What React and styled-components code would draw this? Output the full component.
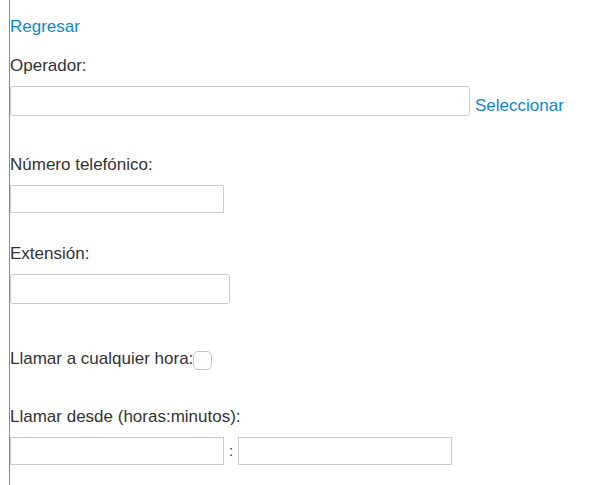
import React from 'react';
import styled, { createGlobalStyle } from 'styled-components';

const GlobalStyle = createGlobalStyle`
  html, body {
    margin: 0;
    padding: 0;
    background: #fff;
  }
  body {
    font-family: "Liberation Sans", Arial, Helvetica, sans-serif;
    font-size: 17px;
    color: #333;
  }
`;

const Page = styled.div`
  margin-left: 9px;
  border-left: 1px solid #8a8a8a;
  min-height: 485px;
  padding-top: 17px;
  box-sizing: border-box;
`;

const LinkText = styled.a`
  display: block;
  color: #0a88cc;
  text-decoration: none;
  line-height: 20px;
  cursor: pointer;
`;

const Field = styled.div`
  margin-top: ${p => p.gap}px;
`;

const Label = styled.label`
  display: block;
  line-height: 20px;
  margin-bottom: 10px;
`;

const Row = styled.div`
  display: flex;
  align-items: ${p => p.align || 'center'};
`;

const TextInput = styled.input`
  box-sizing: border-box;
  width: ${p => p.w}px;
  height: ${p => p.h || 28}px;
  margin: 0;
  padding: 4px 6px;
  border: 1px solid #cccccc;
  border-radius: ${p => (p.rounded ? 3 : 0)}px;
  background: #fff;
  font: inherit;
  color: #333;
  outline: none;
`;

const SideLink = styled(LinkText)`
  margin-left: 5px;
`;

const CheckRow = styled.div`
  display: flex;
  align-items: flex-start;
  line-height: 20px;
`;

const Checkbox = styled.input.attrs({ type: 'checkbox' })`
  appearance: none;
  -webkit-appearance: none;
  box-sizing: border-box;
  width: 19px;
  height: 19px;
  margin: 2px 0 0 0;
  border: 1px solid #c4c4c4;
  border-radius: 5px;
  background: #fff;
`;

const Colon = styled.span`
  width: 14px;
  text-align: center;
  line-height: 20px;
  font-size: 15px;
`;

export default function App() {
  return (
    <>
      <GlobalStyle />
      <Page>
        <LinkText>Regresar</LinkText>

        <Field gap={19}>
          <Label>Operador:</Label>
          <Row align="flex-end">
            <TextInput w={460} h={30} rounded />
            <SideLink>Seleccionar</SideLink>
          </Row>
        </Field>

        <Field gap={39}>
          <Label>Número telefónico:</Label>
          <TextInput w={214} h={28} />
        </Field>

        <Field gap={31}>
          <Label>Extensión:</Label>
          <TextInput w={220} h={30} rounded />
        </Field>

        <Field gap={45}>
          <CheckRow>
            <span>Llamar a cualquier hora:</span>
            <Checkbox />
          </CheckRow>
        </Field>

        <Field gap={37}>
          <Label>Llamar desde (horas:minutos):</Label>
          <Row>
            <TextInput w={214} h={28} />
            <Colon>:</Colon>
            <TextInput w={214} h={28} />
          </Row>
        </Field>
      </Page>
    </>
  );
}
